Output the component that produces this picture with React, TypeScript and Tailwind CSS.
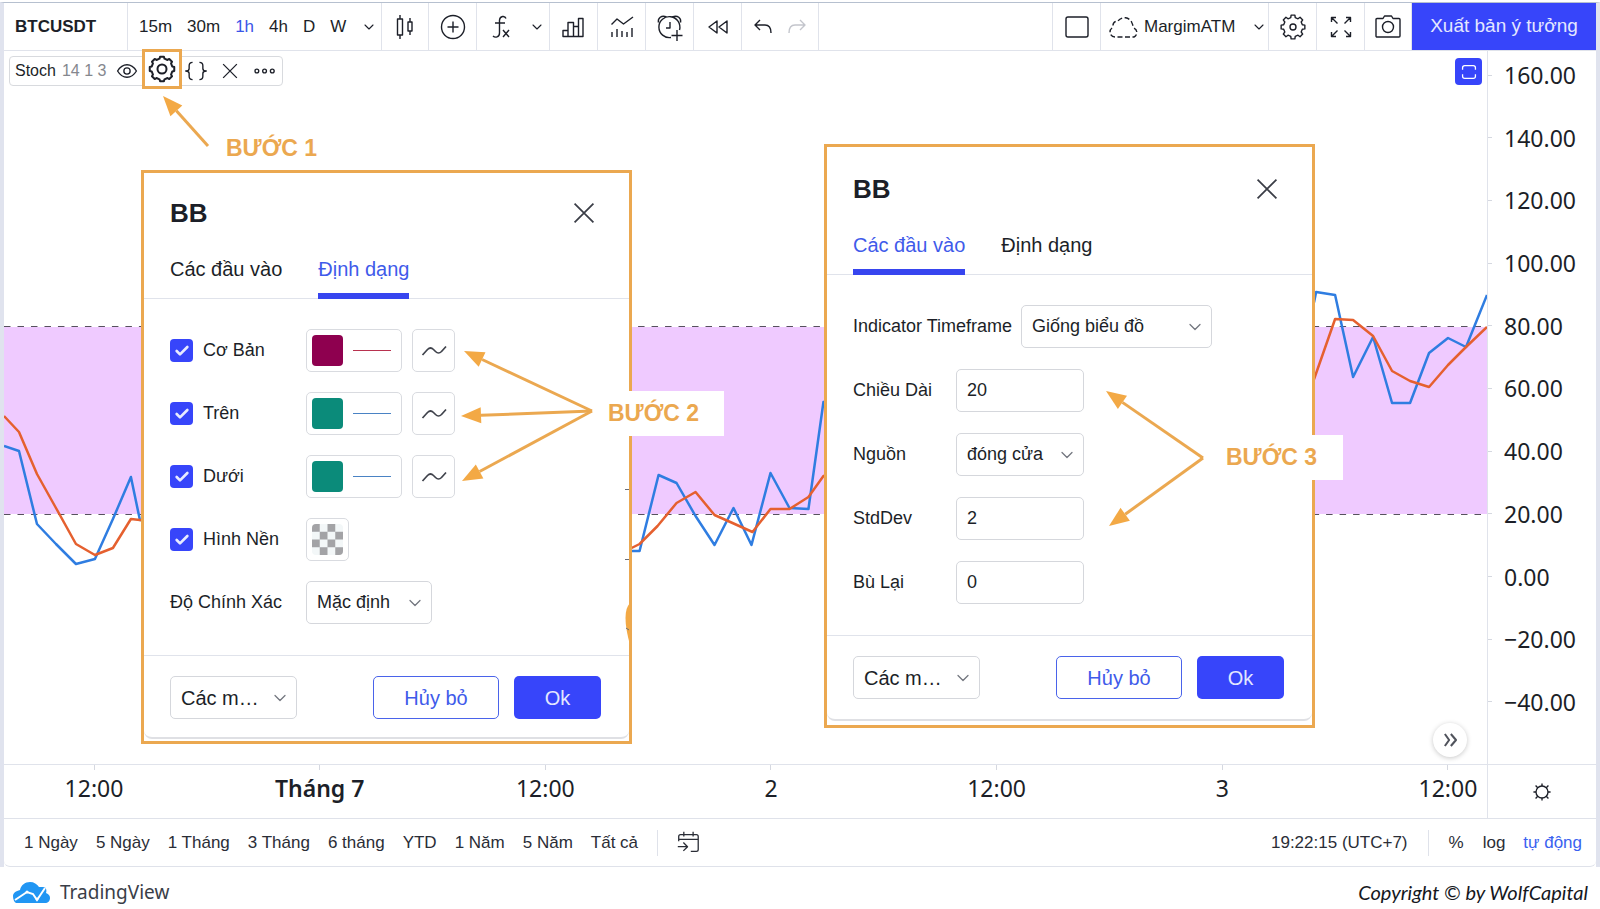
import type { ReactNode } from "react";
import { Check, ChevronDown } from "lucide-react";
import clsx from "clsx";

const BLUE_LINE =
  "4,446 19,451 37,524 56,544 76,564 95,559 113,519 131,477 140,520 632,551 640,551 659,475 677,483 696,516 715,545 734,508 752,545 771,473 790,508 809,509 824,402 1315,302 1317,292 1336,295 1354,377 1374,337 1393,403 1411,403 1430,353 1449,338 1467,347 1488,295";
const ORANGE_LINE =
  "4,416 19,432 37,474 56,508 76,544 95,555 113,548 131,519 140,520 632,548 640,544 658,526 677,503 696,492 715,515 733,523 753,532 771,509 790,509 809,497 824,476 1315,379 1336,319 1354,320 1374,336 1393,371 1411,381 1430,387 1449,365 1467,347 1488,327";

const prices = ["160.00", "140.00", "120.00", "100.00", "80.00", "60.00", "40.00", "20.00", "0.00", "−20.00", "−40.00"];
const times = ["12:00", "Tháng 7", "12:00", "2", "12:00", "3", "12:00"];
const intervals = ["15m", "30m", "1h", "4h", "D", "W"];
const ranges = ["1 Ngày", "5 Ngày", "1 Tháng", "3 Tháng", "6 tháng", "YTD", "1 Năm", "5 Năm", "Tất cả"];

const plots = [
  { id: "basis", label: "Cơ Bản", swatch: "bg-[#8e004f]", line: "bg-[#b8324f]" },
  { id: "upper", label: "Trên", swatch: "bg-[#0b8b7a]", line: "bg-[#4a83c4]" },
  { id: "lower", label: "Dưới", swatch: "bg-[#0b8b7a]", line: "bg-[#4a83c4]" },
];

function gearPath(teeth: number, outer: number, inner: number) {
  const pts: string[] = [];
  const step = (Math.PI * 2) / teeth;
  for (let i = 0; i < teeth; i++) {
    const a = i * step - Math.PI / 2;
    [
      [-0.3, inner],
      [-0.2, outer],
      [0.2, outer],
      [0.3, inner],
    ].forEach(([o, r]) => {
      pts.push(`${(14 + r * Math.cos(a + o * step)).toFixed(2)} ${(14 + r * Math.sin(a + o * step)).toFixed(2)}`);
    });
  }
  return `M${pts.join("L")}Z`;
}

function Icon({ children, className = "size-7", width = 1.4 }: { children: ReactNode; className?: string; width?: number }) {
  return (
    <svg
      viewBox="0 0 28 28"
      className={clsx("shrink-0", className)}
      fill="none"
      stroke="currentColor"
      strokeWidth={width}
      strokeLinejoin="round"
      aria-hidden="true"
    >
      {children}
    </svg>
  );
}

function ToolButton({ label, className, children }: { label: string; className: string; children: ReactNode }) {
  return (
    <button aria-label={label} className={clsx("flex shrink-0 items-center justify-center border-r border-[#e0e3eb]", className)}>
      {children}
    </button>
  );
}

function Toolbar() {
  return (
    <header className="flex h-12 items-stretch border-b border-[#e0e3eb] text-[17px]">
      <button className="w-[124px] shrink-0 border-r border-[#e0e3eb] pl-[11px] text-left font-bold">BTCUSDT</button>
      <div className="flex w-[254px] shrink-0 items-center gap-[15px] border-r border-[#e0e3eb] pl-[11px]">
        {intervals.map((item) => (
          <button key={item} className={item === "1h" ? "text-[#3a55e8]" : ""}>
            {item}
          </button>
        ))}
        <button aria-label="Khoảng thời gian">
          <ChevronDown className="size-4" strokeWidth={1.6} />
        </button>
      </div>
      <ToolButton label="Nến" className="w-[47px]">
        <Icon>
          <path d="M6.500 6h5v16h-5zM9 2v4M9 22v4M17 9h4v9h-4zM19 5v4M19 18v4" />
        </Icon>
      </ToolButton>
      <ToolButton label="So sánh" className="w-12">
        <Icon>
          <circle cx="14" cy="14" r="11.500" />
          <path d="M14 8.500v11M8.500 14h11" />
        </Icon>
      </ToolButton>
      <div className="flex w-[73px] shrink-0 items-center justify-between border-r border-[#e0e3eb] pr-1 pl-[10px]">
        <button aria-label="Các chỉ báo">
          <Icon>
            <path d="M19 5.500c-1-3-6-2.800-6.500 1.500v13c0 4.500-4.500 5-6.500 3M8 10h10M16 17l6 7M22 17l-6 7" />
          </Icon>
        </button>
        <button aria-label="Yêu thích">
          <ChevronDown className="size-4" strokeWidth={1.6} />
        </button>
      </div>
      <ToolButton label="Tài chính" className="w-12">
        <Icon>
          <path d="M3 17.500h5v6H3zM8 9.500h5.500v14H8zM13.500 13.500h5v10h-5zM18.500 5.500H23v18h-4.500z" />
        </Icon>
      </ToolButton>
      <ToolButton label="Mẫu chỉ báo" className="w-12">
        <Icon>
          <path d="M3.500 11.500L9 6l6.500 5L25 4M4 19v5M9 16v8M14 18v6M19 19v5M24 15v9" />
        </Icon>
      </ToolButton>
      <ToolButton label="Cảnh báo" className="w-12">
        <Icon>
          <path d="M15 24.500A10.500 10.500 0 1 1 23.500 17M14 9v6h-4M21 17v11M15.500 22.500h11M2.500 9.500c-1-4 3-8 8-5.500M24.500 9.500c1-4-3-8-8-5.500" />
        </Icon>
      </ToolButton>
      <ToolButton label="Phát lại" className="w-12">
        <Icon>
          <path d="M13 8v12l-8-6zM23 8v12l-8-6z" />
        </Icon>
      </ToolButton>
      <div className="flex w-[77px] shrink-0 items-center justify-center gap-[6px] border-r border-[#e0e3eb]">
        <button aria-label="Hoàn tác">
          <Icon>
            <path d="M11 7l-5 5 5 5M6 12h10c3.500 0 6 2.500 6 8" />
          </Icon>
        </button>
        <button aria-label="Làm lại" className="text-[#c3c5cc]">
          <Icon>
            <path d="M17 7l5 5-5 5M22 12H12c-3.500 0-6 2.500-6 8" />
          </Icon>
        </button>
      </div>

      <div className="ml-auto flex border-l border-[#e0e3eb]">
        <ToolButton label="Bố cục" className="w-12">
          <Icon>
            <rect x="3" y="4" width="22" height="20" rx="2" />
          </Icon>
        </ToolButton>
        <button className="flex w-[168px] shrink-0 items-center gap-1 border-r border-[#e0e3eb] pl-[7px]">
          <svg viewBox="0 0 32 28" className="h-7 w-8 shrink-0" fill="none" stroke="currentColor" strokeWidth="1.4" aria-hidden="true">
            <path
              strokeDasharray="5 2.500"
              d="M7 24a5 5 0 0 1-3-9c0 0 1-1 1-2a4.500 4.500 0 0 1 5-5A8 8 0 0 1 24 10c1 2 1 4 2 5a5 5 0 0 1 0 9z"
            />
          </svg>
          <span>MargimATM</span>
          <ChevronDown className="ml-3 size-4 shrink-0" strokeWidth={1.6} />
        </button>
        <ToolButton label="Cài đặt" className="w-12">
          <Icon>
            <path d={gearPath(8, 12, 9.6)} />
            <circle cx="14" cy="14" r="3" />
          </Icon>
        </ToolButton>
        <ToolButton label="Toàn màn hình" className="w-12">
          <Icon>
            <path d="M4.500 9V4.500H9M4.500 4.500l6 6M19 4.500h4.500V9M23.500 4.500l-6 6M4.500 19v4.500H9M4.500 23.500l6-6M23.500 19v4.500H19M23.500 23.500l-6-6" />
          </Icon>
        </ToolButton>
        <ToolButton label="Chụp ảnh" className="w-[47px]">
          <Icon>
            <path d="M3 5.500h6l1.500-2.500h7L19 5.500h6a1 1 0 0 1 1 1V23a1 1 0 0 1-1 1H3a1 1 0 0 1-1-1V6.500a1 1 0 0 1 1-1z" />
            <circle cx="14" cy="14" r="5.500" />
          </Icon>
        </ToolButton>
        <button className="w-[184px] shrink-0 bg-[#3745fa] text-[19px] text-[#e4e7ff]">Xuất bản ý tưởng</button>
      </div>
    </header>
  );
}

function Legend() {
  return (
    <div className="absolute top-14 left-[9px] flex h-[30px] w-[274px] items-center rounded border border-[#d8dade] bg-white pl-[5px] text-[16px]">
      <span>Stoch</span>
      <span className="ml-[6px] text-[#85878e]">14 1 3</span>
      <button aria-label="Ẩn" className="ml-[10px]">
        <Icon className="size-[22px]" width={1.7}>
          <path d="M2 14c3-5 7-8 12-8s9 3 12 8c-3 5-7 8-12 8S5 19 2 14z" />
          <circle cx="14" cy="14" r="4" />
        </Icon>
      </button>
      <button
        aria-label="Cài đặt chỉ báo"
        className="-mt-1 ml-1 flex size-10 shrink-0 items-center justify-center border-3 border-[#eba850] bg-white"
      >
        <Icon className="size-7" width={2}>
          <path d={gearPath(8, 12.4, 10.6)} />
          <circle cx="14" cy="14" r="4.500" />
        </Icon>
      </button>
      <button aria-label="Mã nguồn" className="ml-[2px]">
        <Icon className="size-6" width={1.6}>
          <path d="M10 4C7 4 6 5 6 8v3c0 2-1 3-4 3 3 0 4 1 4 3v3c0 3 1 4 4 4M18 4c3 0 4 1 4 4v3c0 2 1 3 4 3-3 0-4 1-4 3v3c0 3-1 4-4 4" />
        </Icon>
      </button>
      <button aria-label="Xóa" className="ml-[10px]">
        <Icon className="size-6" width={1.5}>
          <path d="M6 6l16 16M22 6L6 22" />
        </Icon>
      </button>
      <button aria-label="Thêm" className="ml-[11px]">
        <Icon className="size-6" width={1.6}>
          <circle cx="4.500" cy="14" r="2.200" />
          <circle cx="13.500" cy="14" r="2.200" />
          <circle cx="22.500" cy="14" r="2.200" />
        </Icon>
      </button>
    </div>
  );
}

function Chart() {
  return (
    <main className="grid min-h-[713px] flex-1 grid-cols-[1fr_108px] grid-rows-[1fr_54px]">
      <div className="relative border-r border-[#e0e3eb]">
        <svg viewBox="4 51 1484 713" preserveAspectRatio="none" className="absolute inset-0 size-full" aria-hidden="true">
          <rect x="4" y="327" width="1484" height="187" fill="#efcaff" />
          <path d="M4 326.500H1488M4 514.500H1488" stroke="#55505c" strokeDasharray="6.500 7" />
          <g fill="none" strokeWidth="2.500" strokeLinejoin="round">
            <polyline points={BLUE_LINE} stroke="#2f7de1" />
            <polyline points={ORANGE_LINE} stroke="#e5602f" />
          </g>
        </svg>
        <button
          aria-label="Phóng to khung"
          className="absolute top-[7px] right-[5px] flex size-[27px] items-center justify-center rounded bg-[#3745fa] text-white"
        >
          <Icon className="size-5" width={1.8}>
            <path d="M5 11V8a3 3 0 0 1 3-3h12a3 3 0 0 1 3 3v3M5 17v3a3 3 0 0 0 3 3h12a3 3 0 0 0 3-3v-3" />
          </Icon>
        </button>
        <button
          aria-label="Cuộn đến thanh mới nhất"
          className="absolute right-5 bottom-[7px] flex size-[34px] items-center justify-center rounded-full bg-white text-[#50535c] shadow-[0_1px_5px_rgba(0,0,0,0.22)]"
        >
          <Icon className="size-6" width={2.4}>
            <path d="M8 7l5 7-5 7M15 7l6 7-6 7" />
          </Icon>
        </button>
      </div>
      <div className="flex flex-col justify-between pt-[7px] pb-[45px] font-['Noto_Sans',sans-serif] text-[23px] leading-[34px]">
        {prices.map((price) => (
          <div key={price} className="flex items-center">
            <span className="mr-3 h-px w-1 bg-[#d5d8e0]" />
            <span>{price}</span>
          </div>
        ))}
      </div>
      <div className="flex justify-between border-t border-r border-[#e0e3eb] pl-[51px] font-['Noto_Sans',sans-serif] text-[23px] leading-[34px]">
        {times.map((time, i) => (
          <div key={i} className="flex w-[78px] flex-col items-center whitespace-nowrap">
            <span className="mb-px h-[5px] w-px shrink-0 bg-[#d5d8e0]" />
            <span className={time.startsWith("Tháng") ? "font-semibold" : ""}>{time}</span>
          </div>
        ))}
      </div>
      <div className="flex items-center justify-center border-t border-[#e0e3eb]">
        <button aria-label="Cài đặt trục">
          <Icon className="size-6" width={1.6}>
            <circle cx="14" cy="14" r="7" />
            <path d="M14 4v3M14 21v3M4 14h3M21 14h3M6.500 6.500L9 9M19 19l2.500 2.500M6.500 21.500L9 19M19 9l2.500-2.500" />
          </Icon>
        </button>
      </div>
    </main>
  );
}

function BottomBar() {
  return (
    <div className="flex h-[49px] items-center rounded-b-md border-y border-[#dfe2ea] pr-[14px] pl-5 text-[17px] whitespace-nowrap text-[#2a2d36]">
      <div className="flex gap-[18px]">
        {ranges.map((range) => (
          <button key={range}>{range}</button>
        ))}
      </div>
      <span className="mr-[17px] ml-[19px] h-[26px] w-px bg-[#dfe2ea]" />
      <button aria-label="Đi đến ngày">
        <Icon className="size-[26px]">
          <path d="M4 12V7a2 2 0 0 1 2-2h17a2 2 0 0 1 2 2v14a2 2 0 0 1-2 2h-6M4 10h21M9.500 2v5M19.500 2v5M3 18h10M9 13.500l4.500 4.500L9 22.500" />
        </Icon>
      </button>
      <button className="ml-auto">19:22:15 (UTC+7)</button>
      <span className="mr-5 ml-5 h-[26px] w-px bg-[#dfe2ea]" />
      <button>%</button>
      <button className="ml-[19px]">log</button>
      <button className="ml-[18px] text-[#3a62f0]">tự động</button>
    </div>
  );
}

function SelectBox({ id, label, value, className }: { id: string; label?: string; value: string; className: string }) {
  return (
    <div className={clsx("relative h-[43px] shrink-0", className)}>
      <select
        id={id}
        aria-label={label}
        className="size-full appearance-none rounded-[5px] border border-[#d5d7dc] bg-white pl-[10px]"
      >
        <option>{value}</option>
      </select>
      <ChevronDown className="pointer-events-none absolute top-3 right-[7px] size-5 text-[#73767f]" strokeWidth={1.5} />
    </div>
  );
}

type DialogProps = {
  id: string;
  active: number;
  className: string;
  panelClass: string;
  bodyClass: string;
  children: ReactNode;
};

function Dialog({ id, active, className, panelClass, bodyClass, children }: DialogProps) {
  return (
    <section
      role="dialog"
      aria-labelledby={`${id}-title`}
      className={clsx("absolute flex w-[491px] flex-col border-3 border-[#eba850] bg-white", className)}
    >
      <div className={clsx("flex flex-1 flex-col rounded-b-lg border-b-2 border-[#dfe0e4]", panelClass)}>
        <div className="flex h-8 items-center justify-between pr-[33px] pl-[26px]">
          <h2 id={`${id}-title`} className="text-[26px] font-bold">
            BB
          </h2>
          <button aria-label="Đóng">
            <Icon className="size-6 text-[#3a3d46]" width={2}>
              <path d="M3 3l22 22M25 3L3 25" />
            </Icon>
          </button>
        </div>
        <div role="tablist" className="mt-4 flex gap-9 border-b border-[#e0e3eb] pl-[26px] text-[20px]">
          {["Các đầu vào", "Định dạng"].map((tab, i) => (
            <button
              key={tab}
              role="tab"
              aria-selected={i === active}
              className={clsx(
                "-mb-px h-[54px] border-b-6",
                i === active ? "border-[#3745ef] text-[#3f5bea]" : "border-transparent",
              )}
            >
              {tab}
            </button>
          ))}
        </div>
        <div className={clsx("flex flex-col px-[26px] pt-[30px] pb-[31px] text-[18px]", bodyClass)}>{children}</div>
        <div className="flex border-t border-[#e0e3eb] pt-5 pr-7 pl-[26px] text-[20px]">
          <SelectBox id={`${id}-defaults`} label="Các mặc định" value="Các m…" className="w-[127px]" />
          <button className="ml-auto h-[43px] w-[126px] rounded-[5px] border border-[#4a63ea] text-[#3f5bea]">Hủy bỏ</button>
          <button className="ml-[15px] h-[43px] w-[87px] rounded-[5px] bg-[#3745fa] text-[#e4e7ff]">Ok</button>
        </div>
      </div>
    </section>
  );
}

function PlotCheckbox({ id, label }: { id: string; label: string }) {
  return (
    <label htmlFor={id} className="flex w-[136px] items-center gap-[10px]">
      <span className="relative flex size-[23px]">
        <input id={id} type="checkbox" defaultChecked className="size-full appearance-none rounded bg-[#3745fa]" />
        <Check className="pointer-events-none absolute top-1 left-1 size-4 text-[#e8ebff]" strokeWidth={4} />
      </span>
      {label}
    </label>
  );
}

function StyleDialog() {
  return (
    <Dialog
      id="style"
      active={1}
      className="top-[170px] left-[141px] h-[574px]"
      panelClass="mb-[2px] pt-6"
      bodyClass="gap-5"
    >
      {plots.map((plot) => (
        <div key={plot.id} className="flex h-[43px] items-center">
          <PlotCheckbox id={plot.id} label={plot.label} />
          <button
            aria-label={`Màu ${plot.label}`}
            className="flex h-[43px] w-24 items-center gap-[10px] rounded-[5px] border border-[#d9dbe0] pl-[5px]"
          >
            <span className={clsx("size-[31px] rounded", plot.swatch)} />
            <span className={clsx("h-px w-[38px]", plot.line)} />
          </button>
          <button
            aria-label={`Kiểu ${plot.label}`}
            className="ml-[10px] flex size-[43px] items-center justify-center rounded-[5px] border border-[#d9dbe0] text-[#40434c]"
          >
            <Icon className="size-7" width={1.7}>
              <path d="M2.500 18l5-5.500c2-2 4-2 6 0l2 2c2 2 4 2 6 0l4.500-5" />
            </Icon>
          </button>
        </div>
      ))}
      <div className="flex h-[43px] items-center">
        <PlotCheckbox id="background" label="Hình Nền" />
        <button aria-label="Màu nền" className="flex size-[43px] items-center justify-center rounded-[5px] border border-[#d9dbe0]">
          <svg viewBox="0 0 4 4" className="size-[31px] rounded bg-[#f3f7f8]" fill="#a3a3a6" aria-hidden="true">
            <path d="M0 0h1v1H0zM2 0h1v1H2zM1 1h1v1H1zM3 1h1v1H3zM0 2h1v1H0zM2 2h1v1H2zM1 3h1v1H1zM3 3h1v1H3z" />
          </svg>
        </button>
      </div>
      <div className="flex h-[43px] items-center">
        <label htmlFor="precision" className="w-[136px]">
          Độ Chính Xác
        </label>
        <SelectBox id="precision" value="Mặc định" className="w-[126px]" />
      </div>
    </Dialog>
  );
}

function NumberRow({ id, label, value }: { id: string; label: string; value: string }) {
  return (
    <div className="flex items-center">
      <label htmlFor={id} className="w-[103px]">
        {label}
      </label>
      <input id={id} defaultValue={value} className="h-[43px] w-32 rounded-[5px] border border-[#d5d7dc] pl-[10px]" />
    </div>
  );
}

function InputsDialog() {
  return (
    <Dialog
      id="inputs"
      active={0}
      className="top-[144px] left-[824px] h-[584px]"
      panelClass="mb-1 pt-[26px]"
      bodyClass="gap-[21px]"
    >
      <div className="flex items-center">
        <label htmlFor="timeframe" className="w-[168px] shrink-0">
          Indicator Timeframe
        </label>
        <SelectBox id="timeframe" value="Giống biểu đồ" className="w-[191px]" />
      </div>
      <NumberRow id="length" label="Chiều Dài" value="20" />
      <div className="flex items-center">
        <label htmlFor="source" className="w-[103px]">
          Nguồn
        </label>
        <SelectBox id="source" value="đóng cửa" className="w-32" />
      </div>
      <NumberRow id="stddev" label="StdDev" value="2" />
      <NumberRow id="offset" label="Bù Lại" value="0" />
    </Dialog>
  );
}

function Arrow({ from, to }: { from: [number, number]; to: [number, number] }) {
  const angle = Math.atan2(to[1] - from[1], to[0] - from[0]);
  const ux = Math.cos(angle);
  const uy = Math.sin(angle);
  const bx = to[0] - ux * 20;
  const by = to[1] - uy * 20;
  return (
    <g>
      <line x1={from[0]} y1={from[1]} x2={bx} y2={by} stroke="#eba850" strokeWidth="3" />
      <polygon points={`${to[0]},${to[1]} ${bx - uy * 8},${by + ux * 8} ${bx + uy * 8},${by - ux * 8}`} fill="#f3a945" />
    </g>
  );
}

function Steps() {
  const label = "absolute flex items-center text-[23px] font-bold text-[#eba850] whitespace-nowrap";
  return (
    <>
      <svg className="pointer-events-none absolute top-0 left-0 h-[760px] w-[1400px]" aria-hidden="true">
        <Arrow from={[208, 146]} to={[163, 96]} />
        <Arrow from={[592, 411]} to={[464, 351]} />
        <Arrow from={[592, 411]} to={[461, 416]} />
        <Arrow from={[592, 411]} to={[462, 481]} />
        <Arrow from={[1203, 458]} to={[1106, 391]} />
        <Arrow from={[1203, 458]} to={[1109, 526]} />
        <path d="M630 603c-6 6-6 20 0 42z" fill="#f3a945" />
        <path d="M625 489.500h4M625 559.500h4M626 628l3 2" stroke="#6a6d75" />
      </svg>
      <span className={clsx(label, "top-[126px] left-[226px] h-[45px]")}>BƯỚC 1</span>
      <span className={clsx(label, "top-[391px] left-[597px] h-[45px] w-[127px] bg-white pl-[11px]")}>BƯỚC 2</span>
      <span className={clsx(label, "top-[435px] left-[1215px] h-[45px] w-[128px] bg-white pl-[11px]")}>BƯỚC 3</span>
    </>
  );
}

export default function App() {
  return (
    <div className="relative flex min-h-screen flex-col overflow-hidden bg-white pt-[2px] font-['Liberation_Sans',Arial,sans-serif] text-[#1c1f28]">
      <div className="flex flex-1 flex-col border-x-4 border-t border-x-[#e0e3ee] border-t-[#b6c0cf]">
        <Toolbar />
        <Chart />
        <BottomBar />
      </div>
      <footer className="flex h-[42px] items-center justify-between pr-3 pl-[13px]">
        <a
          href="#tradingview"
          className="mt-2 flex items-center gap-[10px] font-['Noto_Sans',sans-serif] text-[19px] leading-6 text-[#3a3e48]"
        >
          <svg viewBox="0 0 37 21" className="h-[21px] w-[37px]" aria-hidden="true">
            <path
              d="M0 14c0-3 3-5 7-6C8 3 12 0 17 0c4 0 7 2 9 5h4c3 0 4 3 3 6 3 1 4 3 4 5 0 3-2 5-5 5H3c-2-1-3-4-3-7z"
              fill="#2196f3"
            />
            <path d="M2 18l12-8 6 2 4 6 8-12" fill="none" stroke="#fff" strokeWidth="2" />
            <circle cx="14" cy="10" r="1.500" fill="#fff" />
            <circle cx="24" cy="17" r="1.500" fill="#fff" />
          </svg>
          TradingView
        </a>
        <p className="mt-2 font-['Lato',sans-serif] text-[20px] leading-6 text-[#16181d] italic">Copyright © by WolfCapital</p>
      </footer>
      <Legend />
      <StyleDialog />
      <InputsDialog />
      <Steps />
    </div>
  );
}
